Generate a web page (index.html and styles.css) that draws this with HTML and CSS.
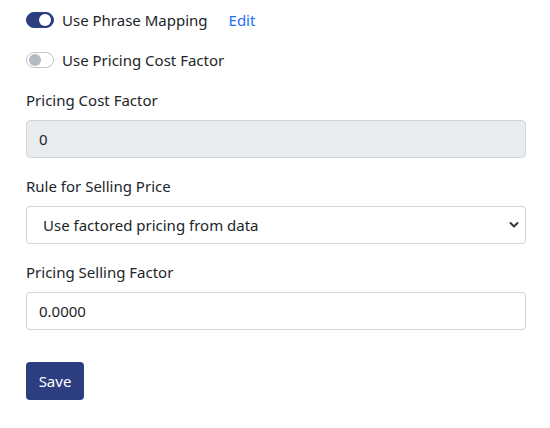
FILE: index.html
```html
<!DOCTYPE html>
<html>
<head>
  <title>Pricing Settings</title>
  <link rel="stylesheet" href="styles.css">
</head>
<body>
<form class="settings">

  <div class="switch-row">
    <span class="switch on"><span class="knob"></span></span>
    <span class="switch-label">Use Phrase Mapping</span>
    <a class="edit" href="#">Edit</a>
  </div>

  <div class="switch-row">
    <span class="switch"><span class="knob"></span></span>
    <span class="switch-label">Use Pricing Cost Factor</span>
  </div>

  <div class="group">
    <label class="label">Pricing Cost Factor</label>
    <div class="field disabled">0</div>
  </div>

  <div class="group">
    <label class="label">Rule for Selling Price</label>
    <div class="field select">
      <span class="option">Use factored pricing from data</span>
      <svg class="chevron" width="10" height="8" viewBox="0 0 10 8">
        <path d="M1.5 2 L5 5.5 L8.5 2" fill="none" stroke="#343a40" stroke-width="2" stroke-linecap="round" stroke-linejoin="round"/>
      </svg>
    </div>
  </div>

  <div class="group">
    <label class="label">Pricing Selling Factor</label>
    <div class="field">0.0000</div>
  </div>

  <div class="actions">
    <button class="btn-save" type="button">Save</button>
  </div>

</form>
</body>
</html>
```

FILE: styles.css
```css
body { margin: 0; background: #fff; color: #212529; font-family: "Noto Sans", "Open Sans", sans-serif; font-size: 15px; }
.settings { padding: 8px 25px 0 26px; width: 500px; display: flex; flex-direction: column; gap: 16px; }

.switch-row { display: flex; align-items: center; height: 24px; }
.switch { width: 28px; height: 16px; box-sizing: border-box; border: 1px solid #bfc5cc; border-radius: 8px; background: #fff; display: flex; align-items: center; padding: 0 2px; }
.switch .knob { width: 12px; height: 12px; border-radius: 50%; background: #b4bac1; }
.switch.on { background: #2c3e80; border-color: #2c3e80; justify-content: flex-end; }
.switch.on .knob { background: #fff; }
.switch-label { margin-left: 8px; }
.edit { margin-left: 21px; color: #1f6ef5; text-decoration: none; }

.group { display: flex; flex-direction: column; }
.label { line-height: 24px; margin-bottom: 8px; }
.field { height: 38px; box-sizing: border-box; border: 1px solid #ced4da; border-radius: 4px; padding: 0 12px; display: flex; align-items: center; font-size: 15px; color: #212529; }
.field.disabled { background: #e9ecef; }
.field.select { justify-content: space-between; padding: 0 6px 0 16px; }
.chevron { display: block; }

.actions { margin-top: 16px; }
.btn-save { width: 58px; height: 38px; border: 0; border-radius: 4px; background: #2c3e80; color: #fff; font-family: inherit; font-size: 15px; padding: 0; }
```
